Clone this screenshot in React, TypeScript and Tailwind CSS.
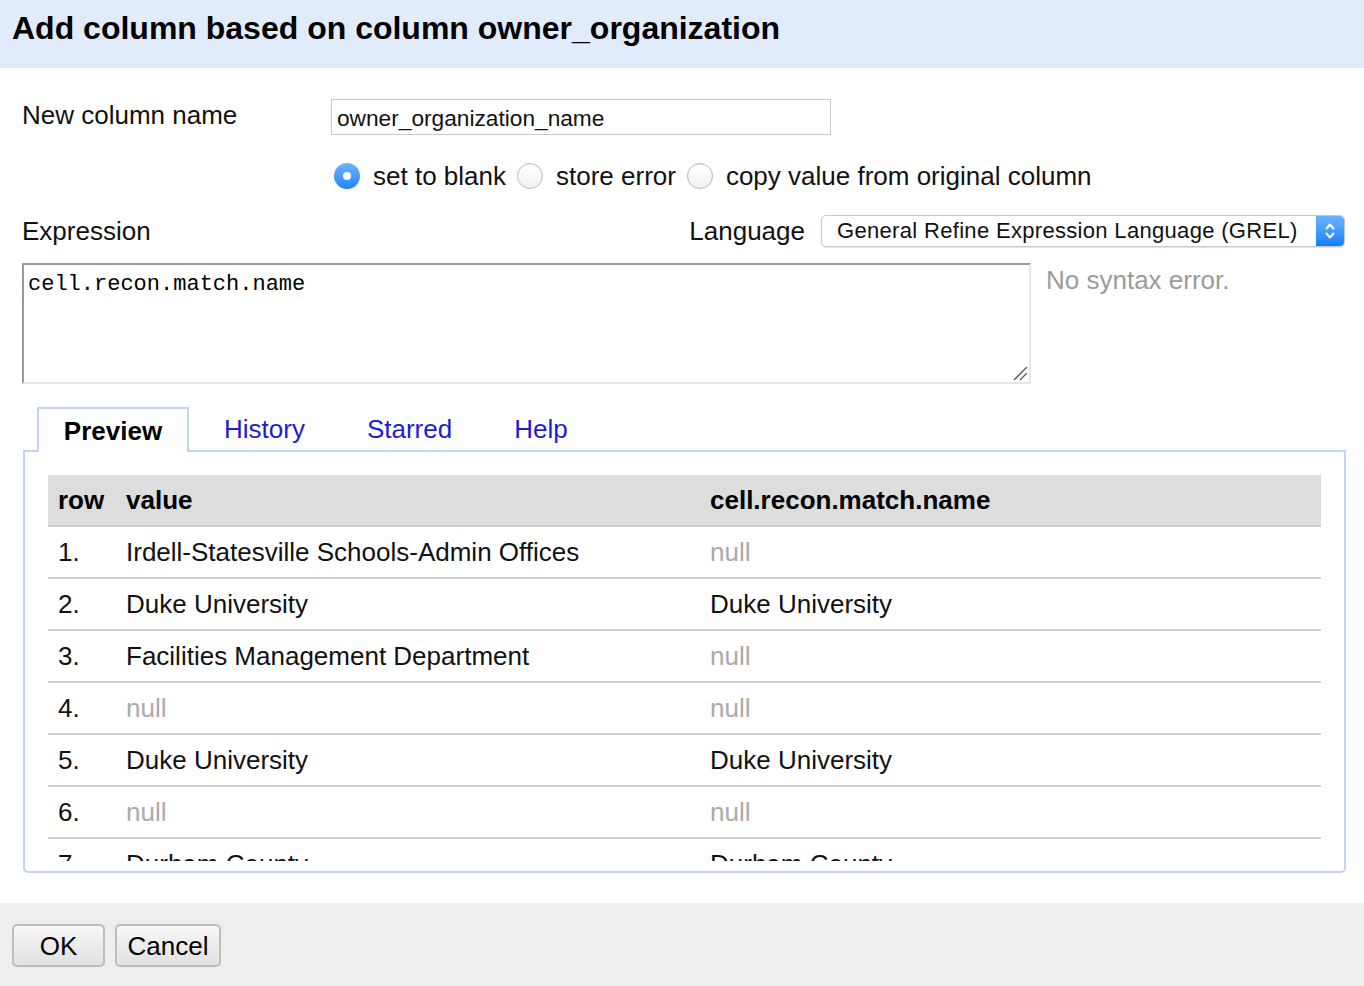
import React from 'react';

const rows = [
    { n: '1.', value: 'Irdell-Statesville Schools-Admin Offices', result: null },
    { n: '2.', value: 'Duke University', result: 'Duke University' },
    { n: '3.', value: 'Facilities Management Department', result: null },
    { n: '4.', value: null, result: null },
    { n: '5.', value: 'Duke University', result: 'Duke University' },
    { n: '6.', value: null, result: null },
    { n: '7.', value: 'Durham County', result: 'Durham County' },
];

const Radio: React.FC<{ checked?: boolean }> = ({ checked }) =>
    checked ? (
        <span className="w-[26px] h-[26px] rounded-full bg-gradient-to-b from-[#6cb4fb] to-[#1c84fb] flex items-center justify-center shrink-0">
            <span className="w-[8px] h-[8px] rounded-full bg-white"></span>
        </span>
    ) : (
        <span className="block w-[26px] h-[26px] rounded-full border border-[#b8b8b8] bg-gradient-to-b from-white to-[#f1f1f1] shadow-[inset_0_1px_1px_rgba(0,0,0,0.05)] shrink-0"></span>
    );

const Cell: React.FC<{ v: string | null }> = ({ v }) =>
    v === null ? <span className="text-[#aaaaaa]">null</span> : <span>{v}</span>;

const App: React.FC = () => {
    return (
        <div className="w-[1364px] h-[986px] flex flex-col bg-white text-[#111] font-['Liberation_Sans',Arial,sans-serif] overflow-hidden">
            {/* Header */}
            <div className="h-[68px] bg-[#e0ebfb] px-[12px] pt-[12px] shrink-0">
                <h1 className="text-[32px] leading-[32px] font-bold text-black">Add column based on column owner_organization</h1>
            </div>

            <div className="flex-1 pl-[22px] pr-[19px] text-[26px]">
                {/* New column name */}
                <div className="mt-[31px] flex items-center h-[36px]">
                    <div className="w-[309px] leading-none pb-[4px]">New column name</div>
                    <div className="w-[500px] h-[36px] border border-[#c8c8c8] px-[5px] flex items-center text-[22.7px] leading-none pt-[2px]">
                        owner_organization_name
                    </div>
                </div>

                {/* On error */}
                <div className="mt-[27px] ml-[312px] flex items-center h-[28px] leading-none">
                    <Radio checked />
                    <span className="ml-[13px]">set to blank</span>
                    <span className="ml-[11px]"><Radio /></span>
                    <span className="ml-[13px]">store error</span>
                    <span className="ml-[11px]"><Radio /></span>
                    <span className="ml-[13px]">copy value from original column</span>
                </div>

                {/* Expression / Language */}
                <div className="mt-[25px] flex items-center justify-between h-[32px] leading-none">
                    <span>Expression</span>
                    <div className="flex items-center">
                        <span className="mr-[16px]">Language</span>
                        <div className="w-[524px] h-[32px] rounded-[5px] border border-[#c9c9c9] shadow-[0_1px_1px_rgba(0,0,0,0.12)] flex items-center overflow-hidden">
                            <span className="flex-1 pl-[15px] text-[22px] tracking-[0.32px] leading-none">General Refine Expression Language (GREL)</span>
                            <span className="w-[28px] h-full bg-gradient-to-b from-[#6ab3fb] to-[#0b7ffd] flex items-center justify-center">
                                <svg width="12" height="20" viewBox="0 0 12 20" fill="none" stroke="white" strokeWidth="2" strokeLinecap="round" strokeLinejoin="round">
                                    <path d="M2.5 7.5 L6 3.5 L9.5 7.5" />
                                    <path d="M2.5 12.5 L6 16.5 L9.5 12.5" />
                                </svg>
                            </span>
                        </div>
                    </div>
                </div>

                {/* Expression textarea */}
                <div className="mt-[16px] flex items-start">
                    <div className="relative">
                        <textarea
                            readOnly
                            defaultValue="cell.recon.match.name"
                            className="block resize-none w-[1009px] h-[121px] border-t-2 border-l-2 border-r-2 border-b-2 border-t-[#9a9a9a] border-l-[#9a9a9a] border-r-[#e6e6e6] border-b-[#e6e6e6] px-[4px] pt-[7px] font-['Liberation_Mono','Courier_New',monospace] text-[22px] leading-[26px] text-black outline-none"
                        />
                        <svg className="absolute right-[3px] bottom-[3px]" width="16" height="16" viewBox="0 0 16 16" fill="none" stroke="#555" strokeWidth="1.3">
                            <path d="M2 15 L15 2" />
                            <path d="M8 15 L15 8" />
                        </svg>
                    </div>
                    <span className="ml-[15px] mt-[4px] text-[#9b9b9b] leading-none">No syntax error.</span>
                </div>

                {/* Tabs */}
                <div className="mt-[23px] ml-[1px] w-[1323px]">
                    <div className="flex items-end pl-[14px] h-[43px]">
                        <div className="h-[45px] w-[152px] justify-center border-2 border-b-0 border-[#c3d3f8] bg-white relative z-10 -mb-[2px] flex items-center font-bold text-black leading-none pt-[1px]">
                            Preview
                        </div>
                        <div className="ml-[8px] px-[27px] h-[43px] flex items-center text-[#1d1dd2] leading-none">History</div>
                        <div className="ml-[8px] px-[27px] h-[43px] flex items-center text-[#1d1dd2] leading-none">Starred</div>
                        <div className="ml-[8px] px-[27px] h-[43px] flex items-center text-[#1d1dd2] leading-none">Help</div>
                    </div>
                    <div className="border-2 border-[#c3d3f8] rounded-b-[5px] pt-[23px] px-[23px] pb-[10px]">
                        <div className="h-[386px] overflow-hidden">
                            <div className="grid grid-cols-[68px_584px_1fr] h-[50px] items-center bg-[#dddddd] border-b-2 border-[#cccccc] font-bold text-black box-content leading-none">
                                <span className="pl-[10px]">row</span>
                                <span className="pl-[10px]">value</span>
                                <span className="pl-[10px]">cell.recon.match.name</span>
                            </div>
                            {rows.map((r, i) => (
                                <div key={i} className="grid grid-cols-[68px_584px_1fr] h-[50px] items-center border-b-2 border-[#d0d0d0] box-content leading-none">
                                    <span className="pl-[10px]">{r.n}</span>
                                    <span className="pl-[10px]"><Cell v={r.value} /></span>
                                    <span className="pl-[10px]"><Cell v={r.result} /></span>
                                </div>
                            ))}
                        </div>
                    </div>
                </div>
            </div>

            {/* Footer */}
            <div className="h-[83px] bg-[#eeeeee] shrink-0 flex items-start pt-[21px] pl-[12px] text-[26px] leading-none">
                <button className="w-[93px] h-[43px] rounded-[5px] border-2 border-[#bdbdbd] bg-gradient-to-b from-[#f7f7f7] to-[#e1e1e1] text-black">OK</button>
                <button className="ml-[10px] w-[106px] h-[43px] rounded-[5px] border-2 border-[#bdbdbd] bg-gradient-to-b from-[#f7f7f7] to-[#e1e1e1] text-black">Cancel</button>
            </div>
        </div>
    );
};

export default App;
